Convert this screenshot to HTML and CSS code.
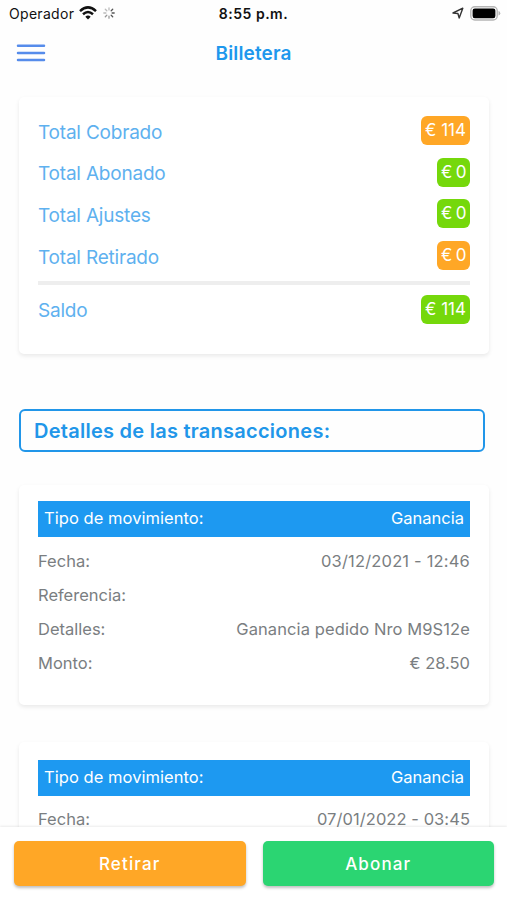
FILE: index.html
```html
<!DOCTYPE html>
<html lang="es">
<head>
<meta charset="utf-8">
<meta name="viewport" content="width=device-width, initial-scale=1">
<title>Billetera</title>
<link rel="stylesheet" href="styles.css">
</head>
<body>
<div class="status">
  <div class="status-left">
    <span class="carrier">Operador</span>
    <svg class="wifi" width="18" height="14" viewBox="0 0 18 14" fill="none" stroke="#111" stroke-width="2.5"><path d="M1 5.1Q9-2.3 17 5.1M4 8.2Q9 3.8 14 8.2"/><path d="M6.3 10.7Q9 8.4 11.7 10.7L9 13.4Z" fill="#111" stroke="none"/></svg>
    <svg class="spinner" width="12" height="12" viewBox="0 0 12 12" stroke-width="1.3" stroke-linecap="round"><path d="M6 .8v2.1M2.3 2.3l1.5 1.5M.8 6h2.1" stroke="#bbb"/><path d="M2.3 9.7l1.5-1.5M6 11.2V9.1" stroke="#999"/><path d="M9.7 9.7L8.2 8.2M11.2 6H9.1M9.7 2.3L8.2 3.8" stroke="#555"/></svg>
  </div>
  <span class="clock">8:55 p.m.</span>
  <div class="status-right">
    <svg class="location" width="12" height="12" viewBox="0 0 12 12" fill="none" stroke="#333" stroke-width="1.4" stroke-linejoin="round"><path d="M1 6L10.8 1.2 7.2 11 5.9 6.5Z"/></svg>
    <svg class="battery" width="31" height="15" viewBox="0 0 31 15"><rect x=".8" y=".8" width="26.4" height="13.2" rx="4" fill="#fff" stroke="#b5b5b5" stroke-width="1.4"/><rect x="2.6" y="2.6" width="22.8" height="9.6" rx="2.2" fill="#000"/><path d="M28.5 5v4.6Q30.3 9 30.3 7.3T28.5 5Z" fill="#b5b5b5"/></svg>
  </div>
</div>
<header class="header">
  <svg width="30" height="20" viewBox="0 0 30 20" stroke="#568ceb" stroke-width="2.5" stroke-linecap="round"><path d="M2 2.7h26M2 9.9h26M2 17.1h26"/></svg>
  <h1 class="title">Billetera</h1>
</header>
<main class="content">
  <section class="card summary">
    <div class="total"><span class="label">Total Cobrado</span><span class="badge orange">€ 114</span></div>
    <div class="total"><span class="label">Total Abonado</span><span class="badge short green">€ 0</span></div>
    <div class="total"><span class="label">Total Ajustes</span><span class="badge short green">€ 0</span></div>
    <div class="total"><span class="label">Total Retirado</span><span class="badge short orange">€ 0</span></div>
    <hr class="rule">
    <div class="total"><span class="label">Saldo</span><span class="badge green">€ 114</span></div>
  </section>
  <h2 class="subtitle"><span>Detalles de las transacciones:</span></h2>
  <section class="card movement">
    <div class="type"><span class="type-label">Tipo de movimiento:</span><span class="kind">Ganancia</span></div>
    <div class="row"><span>Fecha:</span><span class="date">03/12/2021 - 12:46</span></div>
    <div class="row"><span>Referencia:</span></div>
    <div class="row"><span>Detalles:</span><span class="detail">Ganancia pedido Nro M9S12e</span></div>
    <div class="row"><span>Monto:</span><span class="amount">€ 28.50</span></div>
  </section>
  <section class="card movement">
    <div class="type"><span class="type-label">Tipo de movimiento:</span><span class="kind">Ganancia</span></div>
    <div class="row"><span>Fecha:</span><span class="date-next">07/01/2022 - 03:45</span></div>
  </section>
</main>
<footer class="footer">
  <button class="btn btn-orange">Retirar</button>
  <button class="btn btn-green">Abonar</button>
</footer>
</body>
</html>
```
FILE: styles.css
```css
* { box-sizing: border-box; }
body {
  margin: 0;
  height: 900px;
  display: flex;
  flex-direction: column;
  overflow: hidden;
  background: #fefefe;
  font-family: Inter, "Liberation Sans", sans-serif;
}
.status {
  flex: none;
  height: 28px;
  padding: 0 6px 0 9px;
  display: grid;
  grid-template-columns: 1fr auto 1fr;
  align-items: center;
  color: #111;
  font-size: 14px;
}
.status-left, .status-right { display: flex; align-items: center; padding-bottom: 2px; }
.status-left { gap: 6px; }
.status-right { justify-content: flex-end; gap: 6px; }
.carrier { letter-spacing: .3px; margin-right: -1px; }
.clock { font-weight: 600; letter-spacing: .5px; padding-bottom: 1px; margin-right: 3px; }
.header {
  flex: none;
  height: 50px;
  padding: 0 16px;
  display: grid;
  grid-template-columns: 30px 1fr 30px;
  align-items: center;
}
.title {
  margin: 0;
  text-align: center;
  color: #1e98ed;
  font-size: 19px;
  font-weight: 600;
  letter-spacing: .15px;
}
.content { flex: 1; min-height: 0; overflow: hidden; padding: 19px 18px 0 19px; }
.card {
  border-radius: 5px;
  background: #fff;
  padding: 0 19px;
  box-shadow: 0 2px 4px rgba(0, 0, 0, .085);
}
.summary { height: 257px; padding-top: 13px; }
.total { height: 41.6px; display: flex; justify-content: space-between; align-items: center; }
.label { color: #5eb1ef; font-size: 19px; letter-spacing: -.2px; padding-top: 3px; }
.badge {
  height: 29px;
  padding: 0 4px;
  border-radius: 6px;
  line-height: 29px;
  font-size: 17px;
  color: #fff;
}
.short { letter-spacing: -.6px; }
.orange { background: #ffa726; }
.green { background: #75d80b; }
.rule { height: 4px; margin: 5px 0 3px; border: 0; background: #eee; }
.subtitle {
  margin: 54.5px 4px 33.5px 0;
  height: 43px;
  padding-left: 13px;
  border: 2px solid #2196e9;
  border-radius: 6px;
  line-height: 40px;
  color: #2196e9;
  font-size: 20px;
  font-weight: 600;
  letter-spacing: .26px;
}
.movement { height: 220px; padding-top: 16px; margin-bottom: 37px; }
.movement + .movement { padding-top: 18px; }
.type {
  height: 36px;
  margin-bottom: 7px;
  padding: 0 6px;
  display: flex;
  justify-content: space-between;
  line-height: 34px;
  background: #1d99f1;
  color: #fff;
  font-size: 16.5px;
}
.movement + .movement .type { margin-bottom: 6px; }
.type-label { letter-spacing: .05px; }
.row {
  height: 34.1px;
  display: flex;
  justify-content: space-between;
  line-height: 34px;
  color: #7a7e81;
  font-size: 16.5px;
}
.date { letter-spacing: .18px; }
.date-next { letter-spacing: .06px; }
.detail { letter-spacing: .1px; }
.footer {
  flex: none;
  height: 73px;
  padding: 14px 13px 14px 14px;
  display: grid;
  grid-template-columns: 1fr 1fr;
  gap: 17px;
  background: #fff;
  box-shadow: 0 -1px 2px rgba(0, 0, 0, .08);
}
.btn {
  border: 0;
  border-radius: 5px;
  padding: 0;
  color: #fff;
  font: 500 17px Inter, sans-serif;
  letter-spacing: 1.15px;
  box-shadow: 0 2px 3px rgba(0, 0, 0, .25);
}
.btn-orange { background: #ffa726; }
.btn-green { background: #2bd572; }
```
